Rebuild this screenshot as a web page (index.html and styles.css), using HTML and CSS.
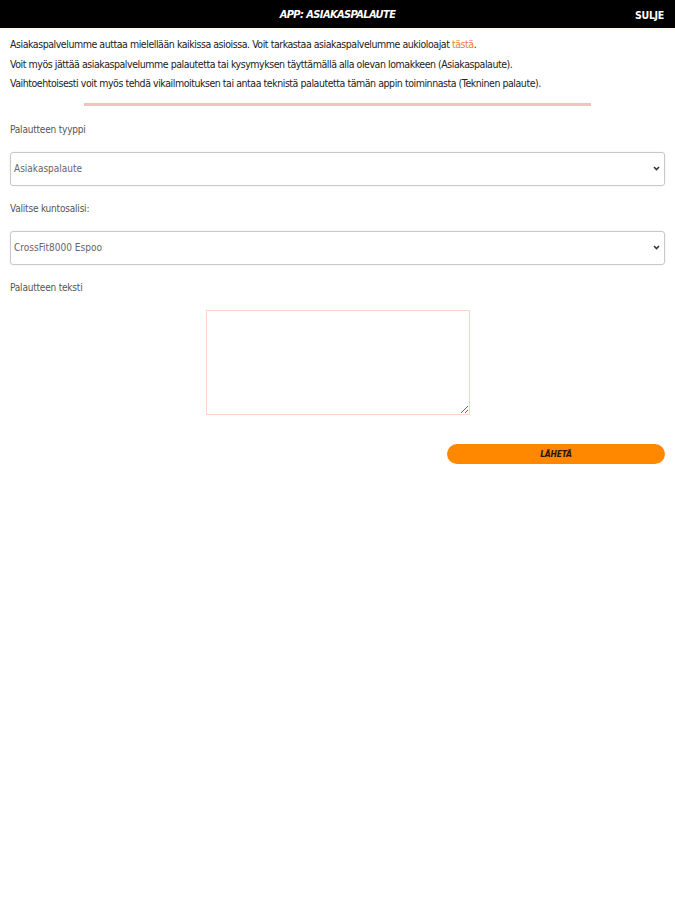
FILE: index.html
```html
<!DOCTYPE html>
<html lang="fi">
<head>
<meta charset="utf-8">
<title>APP: Asiakaspalaute</title>
<link rel="stylesheet" href="styles.css">
</head>
<body>
<header class="topbar">
  <div class="title">APP: ASIAKASPALAUTE</div>
  <div class="close">SULJE</div>
</header>
<section class="intro">
  <p>Asiakaspalvelumme auttaa mielellään kaikissa asioissa. Voit tarkastaa asiakaspalvelumme aukioloajat <a class="link">tästä</a>.</p>
  <p>Voit myös jättää asiakaspalvelumme palautetta tai kysymyksen täyttämällä alla olevan lomakkeen (Asiakaspalaute).</p>
  <p>Vaihtoehtoisesti voit myös tehdä vikailmoituksen tai antaa teknistä palautetta tämän appin toiminnasta (Tekninen palaute).</p>
</section>
<hr class="divider">
<form class="form">
  <label class="label first">Palautteen tyyppi</label>
  <div class="select">
    <span>Asiakaspalaute</span>
    <svg class="chev" width="7" height="5" viewBox="0 0 7 5"><path d="M1 1 L3.5 3.6 L6 1" fill="none" stroke="#333" stroke-width="1.5"/></svg>
  </div>
  <label class="label">Valitse kuntosalisi:</label>
  <div class="select">
    <span>CrossFit8000 Espoo</span>
    <svg class="chev" width="7" height="5" viewBox="0 0 7 5"><path d="M1 1 L3.5 3.6 L6 1" fill="none" stroke="#333" stroke-width="1.5"/></svg>
  </div>
  <label class="label">Palautteen teksti</label>
  <div class="textarea-wrap"><textarea class="textarea"></textarea></div>
  <div class="actions"><button type="button" class="send">LÄHETÄ</button></div>
</form>
</body>
</html>
```
FILE: styles.css
```css
html, body {
  margin: 0;
  padding: 0;
  background: #fff;
}
body {
  font-family: "DejaVu Sans Condensed", "DejaVu Sans", sans-serif;
  font-stretch: condensed;
  color: #222;
}
.topbar {
  height: 28px;
  background: #000;
  border-bottom: 2px solid #fbf8ec;
  display: flex;
  align-items: center;
  justify-content: center;
  position: relative;
}
.title {
  color: #fff;
  font-weight: bold;
  font-style: italic;
  font-size: 11px;
  letter-spacing: -0.6px;
}
.close {
  position: absolute;
  right: 11px;
  top: 9px;
  color: #fff;
  font-weight: bold;
  font-size: 10.5px;
  letter-spacing: -0.3px;
}
.intro {
  padding: 5px 10px 0;
}
.intro p {
  margin: 0;
  font-size: 10.5px;
  line-height: 19.5px;
  letter-spacing: -0.45px;
  color: #222;
}
.link {
  color: #f07a3a;
}
.divider {
  width: 75%;
  margin: 9px auto 0;
  border: 0;
  height: 3px;
  background: #ecc5be;
}
.form {
  display: flex;
  flex-direction: column;
  padding: 0 10px;
}
.label {
  font-size: 10px;
  color: #555;
  letter-spacing: -0.2px;
  margin-top: 16px;
  line-height: 14px;
}
.label.first {
  margin-top: 17px;
}
.select {
  margin-top: 15px;
  height: 32px;
  border: 1px solid #c8c8c8;
  border-radius: 3px;
  box-shadow: 0 0 2px rgba(0,0,0,0.08);
  display: flex;
  align-items: center;
  justify-content: space-between;
  padding: 0 4px 0 3px;
  font-size: 10px;
  color: #666;
  letter-spacing: 0;
}
.chev {
  display: block;
}
.textarea-wrap {
  display: flex;
  justify-content: center;
  margin-top: 15px;
}
.textarea {
  width: 260px;
  height: 101px;
  border: 1px solid #fbd6c6;
  padding: 1px;
  margin: 0;
  font-family: inherit;
  resize: vertical;
}
.actions {
  display: flex;
  justify-content: flex-end;
  margin-top: 29px;
}
.send {
  width: 218px;
  height: 20px;
  border: 0;
  border-radius: 10px;
  background: #ff8800;
  color: #2a1400;
  font-family: inherit;
  font-weight: bold;
  font-style: italic;
  font-size: 8.5px;
  letter-spacing: -0.2px;
  padding: 0;
}
```
